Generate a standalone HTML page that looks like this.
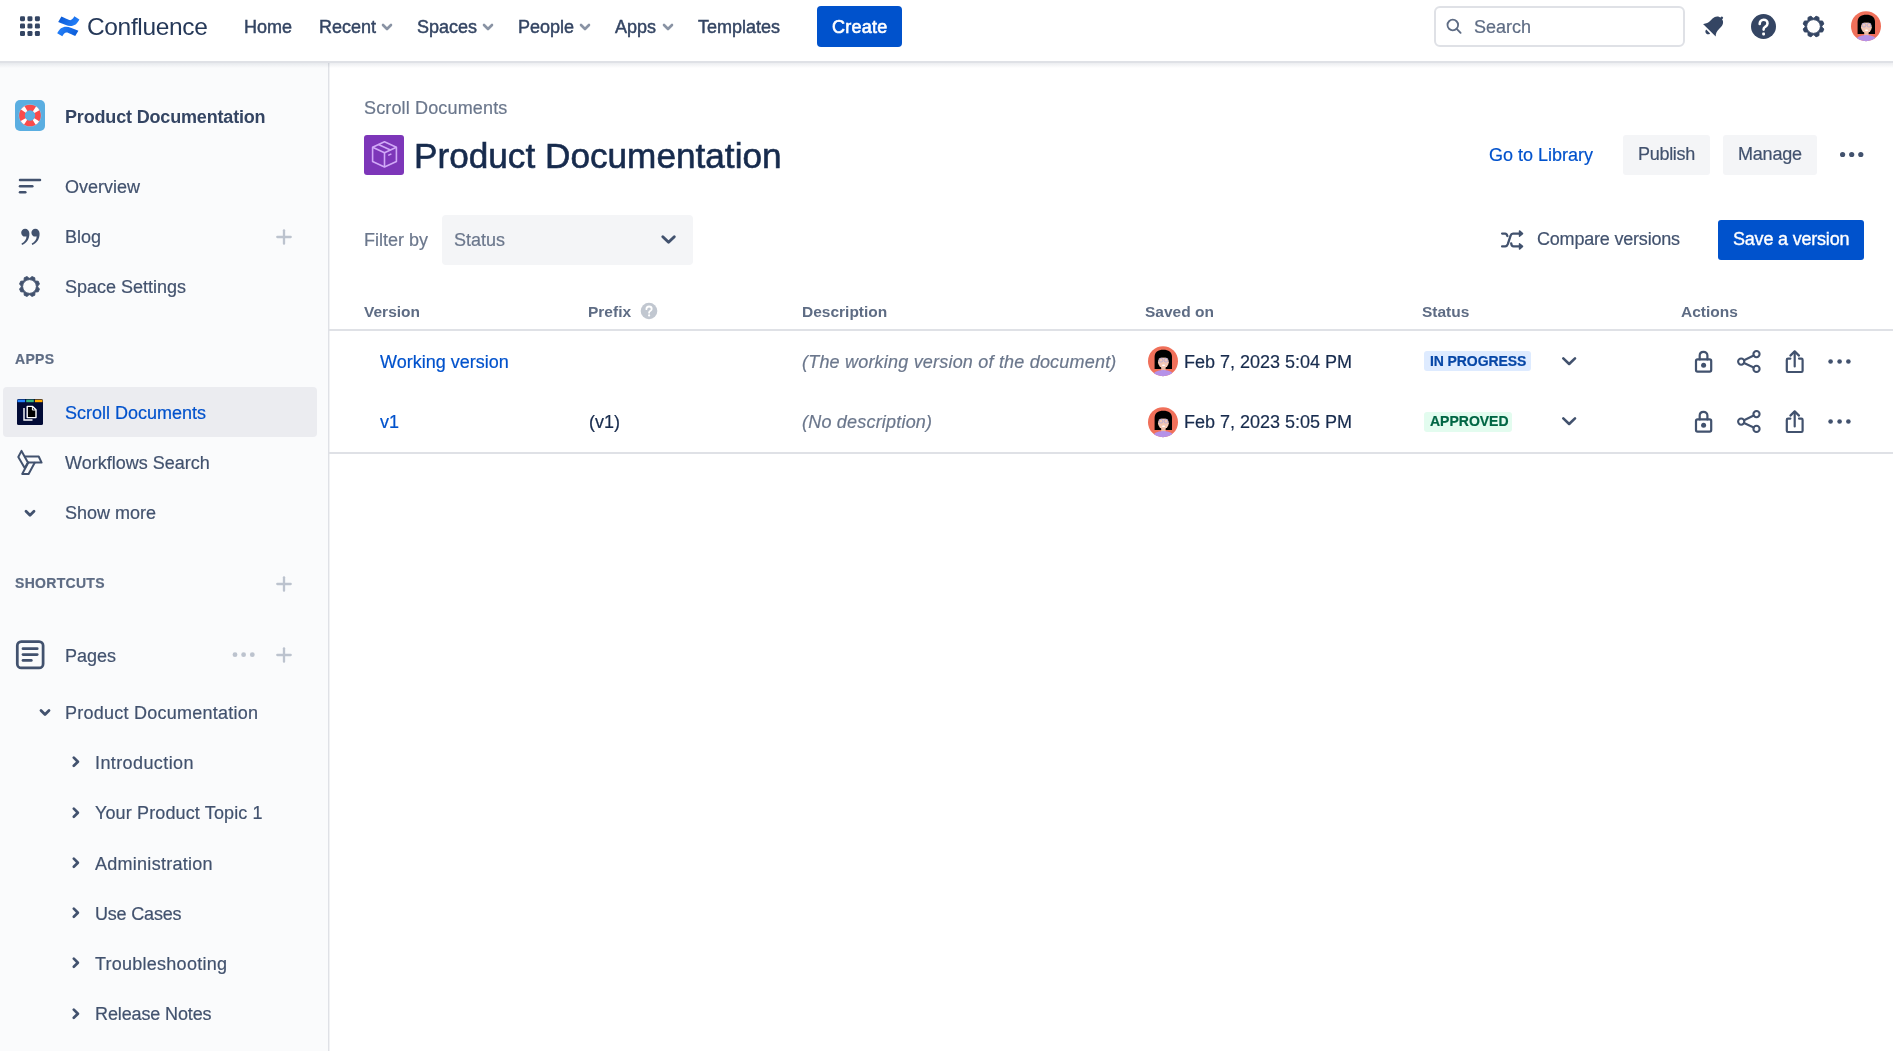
<!DOCTYPE html>
<html><head><meta charset="utf-8">
<style>
*{box-sizing:border-box;margin:0;padding:0}
html,body{width:1893px;height:1051px;overflow:hidden;background:#fff;font-family:"Liberation Sans",sans-serif;color:#172B4D}
.a{position:absolute;white-space:nowrap;line-height:18px;font-size:18px;-webkit-text-stroke-width:0.2px;will-change:transform}
.hd,.b{-webkit-text-stroke-width:0}
svg{position:absolute;overflow:visible}
#hdr{position:absolute;left:0;top:0;width:1893px;height:62px;background:#fff;z-index:5}
#hdrline{position:absolute;left:0;top:61px;width:1893px;height:2px;background:#DFE1E6;z-index:6}
#hdrshadow{position:absolute;left:0;top:63px;width:1893px;height:5px;background:linear-gradient(rgba(9,30,66,0.08),rgba(9,30,66,0));z-index:6}
#side{position:absolute;left:0;top:62px;width:328px;height:989px;background:#FAFBFC}
#sideline{position:absolute;left:328px;top:62px;width:1px;height:989px;background:#DFE1E6;box-shadow:1px 0 0 #F1F2F4}
.a.nav{color:#344563;-webkit-text-stroke-width:0.45px}
.chev{stroke:#8993A4;stroke-width:2.6;fill:none;stroke-linecap:round;stroke-linejoin:round}
.si{color:#42526E}
.ic{fill:none;stroke:#42526E;stroke-linecap:round;stroke-linejoin:round}
.hd{font-weight:bold;font-size:15.5px;color:#5E6C84}
.btn{position:absolute;border-radius:3px}
</style></head><body>

<!-- HEADER -->
<div id="hdr">
  <!-- app switcher -->
  <svg style="left:20px;top:16px" width="21" height="21" viewBox="0 0 21 21"><g fill="#344563"><rect x="0" y="0.15" width="5" height="5" rx="1.3"/><rect x="7.45" y="0.15" width="5" height="5" rx="1.3"/><rect x="14.9" y="0.15" width="5" height="5" rx="1.3"/><rect x="0" y="7.6" width="5" height="5" rx="1.3"/><rect x="7.45" y="7.6" width="5" height="5" rx="1.3"/><rect x="14.9" y="7.6" width="5" height="5" rx="1.3"/><rect x="0" y="15.05" width="5" height="5" rx="1.3"/><rect x="7.45" y="15.05" width="5" height="5" rx="1.3"/><rect x="14.9" y="15.05" width="5" height="5" rx="1.3"/></g></svg>
  <!-- confluence logo -->
  <svg style="left:57px;top:16px" width="23" height="21" viewBox="0 0 23 21">
    <defs>
      <linearGradient id="lg1" x1="0" y1="0.3" x2="1" y2="0.6"><stop offset="0" stop-color="#0B5AD6"/><stop offset="1" stop-color="#2481FB"/></linearGradient>
    </defs>
    <path id="cfb" d="M4.4 0.5 C7.5 1.8 10.3 3.3 12.2 4.0 C14.3 4.6 15.8 3.2 17.3 0.3 L22.4 3.4 C20.2 7.8 17.5 9.9 13.5 9.9 C10.5 9.9 6.5 8.0 1.2 5.9 Z" fill="url(#lg1)"/>
    <path d="M4.4 0.5 C7.5 1.8 10.3 3.3 12.2 4.0 C14.3 4.6 15.8 3.2 17.3 0.3 L22.4 3.4 C20.2 7.8 17.5 9.9 13.5 9.9 C10.5 9.9 6.5 8.0 1.2 5.9 Z" fill="url(#lg1)" transform="rotate(180 11.3 10.3)"/>
  </svg>
  <div class="a" style="left:87px;top:15px;font-size:24.5px;line-height:24px;letter-spacing:-0.35px;color:#253858;-webkit-text-stroke-width:0">Confluence</div>

  <div class="a nav" style="left:244px;top:18px">Home</div>
  <div class="a nav" style="left:319px;top:18px">Recent</div>
  <svg style="left:382px;top:24px" width="10" height="6"><path class="chev" d="M1 1 L5 5 L9 1"/></svg>
  <div class="a nav" style="left:417px;top:18px">Spaces</div>
  <svg style="left:483px;top:24px" width="10" height="6"><path class="chev" d="M1 1 L5 5 L9 1"/></svg>
  <div class="a nav" style="left:518px;top:18px">People</div>
  <svg style="left:580px;top:24px" width="10" height="6"><path class="chev" d="M1 1 L5 5 L9 1"/></svg>
  <div class="a nav" style="left:615px;top:18px">Apps</div>
  <svg style="left:663px;top:24px" width="10" height="6"><path class="chev" d="M1 1 L5 5 L9 1"/></svg>
  <div class="a nav" style="left:698px;top:18px">Templates</div>

  <div class="btn" style="left:817px;top:6px;width:85px;height:41px;background:#0052CC;border-radius:4px"></div>
  <div class="a" style="left:832px;top:17.5px;color:#fff;-webkit-text-stroke-width:0.6px;letter-spacing:0.25px">Create</div>

  <!-- search -->
  <div style="position:absolute;left:1434px;top:6px;width:251px;height:40.5px;border:2px solid #DFE1E6;border-radius:6px;background:#fff"></div>
  <svg style="left:1447px;top:18px" width="16" height="17" viewBox="0 0 16 17"><circle cx="5.8" cy="7" r="5.3" fill="none" stroke="#5E6C84" stroke-width="1.8"/><path d="M9.7 10.9 L13.6 14.8" stroke="#5E6C84" stroke-width="1.9" stroke-linecap="round"/></svg>
  <div class="a" style="left:1474px;top:18px;color:#5E6C84">Search</div>

  <!-- bell -->
  <svg style="left:1701.8px;top:11.9px" width="25.6" height="25.6" viewBox="0 0 24 24">
    <g transform="rotate(45 12 12)" fill="#344563">
      <path d="M3.6 19.2 C5.6 17.4 6.4 15 6.4 12 L6.4 9.4 C6.4 5.6 8.8 3.4 12 3.4 C15.2 3.4 17.6 5.6 17.6 9.4 L17.6 12 C17.6 15 18.4 17.4 20.4 19.2 Z"/>
      <rect x="10.9" y="1.6" width="2.2" height="2.6" rx="0.8"/>
      <path d="M9.4 20.8 L14.6 20.8 C14.6 22.3 13.5 23.4 12 23.4 C10.5 23.4 9.4 22.3 9.4 20.8 Z"/>
    </g>
  </svg>
  <!-- help -->
  <svg style="left:1751px;top:14px" width="25" height="25" viewBox="0 0 25 25">
    <circle cx="12.5" cy="12.5" r="12.5" fill="#344563"/>
    <path d="M8.7 9.9 C8.7 7.3 10.4 5.7 12.6 5.7 C14.9 5.7 16.5 7.3 16.5 9.4 C16.5 11.4 14.9 12.3 13.9 13 C13 13.6 12.6 14.4 12.6 15.6" fill="none" stroke="#fff" stroke-width="2.6" stroke-linecap="round"/>
    <rect x="11.2" y="18.6" width="2.8" height="2.8" rx="0.8" fill="#fff"/>
  </svg>
  <!-- settings gear -->
  <svg style="left:1802px;top:14.5px" width="23" height="23" viewBox="-0.5 -0.5 23 23"><path fill="#344563" stroke="#344563" stroke-width="1" stroke-linejoin="round" fill-rule="evenodd" d="M19.28 10.49 L21.29 8.44 L20.09 5.54 L17.22 5.50 L16.50 4.78 L16.46 1.91 L13.56 0.71 L11.51 2.72 L10.49 2.72 L8.44 0.71 L5.54 1.91 L5.50 4.78 L4.78 5.50 L1.91 5.54 L0.71 8.44 L2.72 10.49 L2.72 11.51 L0.71 13.56 L1.91 16.46 L4.78 16.50 L5.50 17.22 L5.54 20.09 L8.44 21.29 L10.49 19.28 L11.51 19.28 L13.56 21.29 L16.46 20.09 L16.50 17.22 L17.22 16.50 L20.09 16.46 L21.29 13.56 L19.28 11.51ZM17.90 11.00 A6.9 6.9 0 1 0 4.10 11.00 A6.9 6.9 0 1 0 17.90 11.00Z"/></svg>
  <!-- avatar -->
  <svg style="left:1851px;top:11px" width="30" height="30" viewBox="0 0 30 30" class="avatar"><defs><clipPath id="avc"><circle cx="15" cy="15.2" r="15"/></clipPath></defs>
    <g clip-path="url(#avc)">
      <rect width="30" height="31" fill="#F0705A"/>
      <path d="M6.6 23 L6.6 11 C6.6 6 10 3.8 15.3 3.8 C20.6 3.8 24 6 24 11 L24 23 Z" fill="#000"/>
      <rect x="13.2" y="19" width="4.4" height="6" fill="#EDB9A3"/>
      <ellipse cx="15.4" cy="16.2" rx="5.4" ry="5.6" fill="#F4C8B4"/>
      <rect x="9" y="6" width="13" height="5.6" fill="#000"/>
      <g fill="none" stroke="#9AA0E6" stroke-width="0.6"><circle cx="13" cy="14.2" r="1.9"/><circle cx="18" cy="14.2" r="1.9"/></g>
      <ellipse cx="15.5" cy="19.3" rx="1.7" ry="0.7" fill="#fff"/>
      <ellipse cx="15.3" cy="30" rx="11" ry="6" fill="#B591E8"/>
    </g></svg>
</div>
<div id="hdrline"></div>
<div id="hdrshadow"></div>

<!-- SIDEBAR -->
<div id="side"></div>
<div id="sideline"></div>

<!-- space icon -->
<svg style="left:15px;top:100px" width="30" height="31" viewBox="0 0 30 31">
  <rect x="0" y="0" width="30" height="31" rx="5" fill="#5AAEE1"/>
  <circle cx="15" cy="15.5" r="11" fill="none" stroke="#8CC8EE" stroke-width="0.8"/>
  <circle cx="15" cy="15.5" r="8" fill="none" stroke="#FA4B4B" stroke-width="5.6"/>
  <circle cx="15" cy="15.5" r="8" fill="none" stroke="#fff" stroke-width="5.6" stroke-dasharray="3.6 8.97" stroke-dashoffset="-4.48"/>
</svg>
<div class="a si" style="left:65px;top:108px;font-weight:bold;color:#344563;letter-spacing:-0.17px;-webkit-text-stroke-width:0">Product Documentation</div>

<svg style="left:18px;top:178px" width="24" height="16" viewBox="0 0 24 16"><g class="ic" stroke-width="2.5"><path d="M2 2 L22 2"/><path d="M2 8.2 L14.3 8.2"/><path d="M2 14.3 L7.3 14.3"/></g></svg>
<div class="a si" style="left:65px;top:178px">Overview</div>

<svg style="left:20px;top:228px" width="21" height="18" viewBox="0 0 21 18"><g fill="#42526E"><path d="M5.1 0.7 C7.6 0.7 9.4 2.7 9.4 5.7 C9.4 10.9 6.6 15.3 2 17 L1.5 15.5 C4.6 13.9 6.3 11.5 6.5 8.4 C6.1 8.5 5.6 8.6 5.1 8.6 C2.9 8.6 1.2 6.9 1.2 4.65 C1.2 2.4 2.9 0.7 5.1 0.7 Z"/><path transform="translate(10.2 0)" d="M5.1 0.7 C7.6 0.7 9.4 2.7 9.4 5.7 C9.4 10.9 6.6 15.3 2 17 L1.5 15.5 C4.6 13.9 6.3 11.5 6.5 8.4 C6.1 8.5 5.6 8.6 5.1 8.6 C2.9 8.6 1.2 6.9 1.2 4.65 C1.2 2.4 2.9 0.7 5.1 0.7 Z"/></g></svg>
<div class="a si" style="left:65px;top:228px">Blog</div>
<svg style="left:276px;top:229px" width="16" height="16" viewBox="0 0 16 16"><g stroke="#BCC3CE" stroke-width="2.3" stroke-linecap="round"><path d="M8 1.3 L8 14.7"/><path d="M1.3 8 L14.7 8"/></g></svg>

<svg style="left:18px;top:275px" width="23" height="23" viewBox="-0.5 -0.5 23 23"><path fill="#42526E" stroke="#42526E" stroke-width="1" stroke-linejoin="round" fill-rule="evenodd" d="M19.18 10.50 L20.90 8.53 L19.74 5.75 L17.14 5.57 L16.43 4.86 L16.25 2.26 L13.47 1.10 L11.50 2.82 L10.50 2.82 L8.53 1.10 L5.75 2.26 L5.57 4.86 L4.86 5.57 L2.26 5.75 L1.10 8.53 L2.82 10.50 L2.82 11.50 L1.10 13.47 L2.26 16.25 L4.86 16.43 L5.57 17.14 L5.75 19.74 L8.53 20.90 L10.50 19.18 L11.50 19.18 L13.47 20.90 L16.25 19.74 L16.43 17.14 L17.14 16.43 L19.74 16.25 L20.90 13.47 L19.18 11.50ZM17.90 11.00 A6.9 6.9 0 1 0 4.10 11.00 A6.9 6.9 0 1 0 17.90 11.00Z"/></svg>
<div class="a si" style="left:65px;top:278px">Space Settings</div>

<div class="a" style="left:15px;top:352px;font-size:14px;line-height:14px;font-weight:bold;color:#5E6C84;letter-spacing:0.3px">APPS</div>

<div class="btn" style="left:3px;top:387px;width:314px;height:50px;background:#EBECF0;border-radius:4px"></div>
<svg style="left:17px;top:399px" width="26" height="26" viewBox="0 0 26 26">
  <rect x="0" y="0" width="26" height="26" rx="1.5" fill="#020B36"/>
  <rect x="0.5" y="0.6" width="7.6" height="2.6" fill="#2684FF"/>
  <rect x="9.2" y="0.6" width="7.6" height="2.6" fill="#36B37E"/>
  <rect x="17.9" y="0.6" width="7.6" height="2.6" fill="#FFAB00"/>
  <path d="M7 9 L7 21 L15.5 21" fill="none" stroke="#fff" stroke-width="1.4"/>
  <path d="M10.2 7.4 L15.6 7.4 L19 10.8 L19 18.6 L10.2 18.6 Z" fill="#000" stroke="#fff" stroke-width="1.4" stroke-linejoin="round"/>
  <path d="M15.4 7.6 L15.4 11 L18.8 11" fill="none" stroke="#fff" stroke-width="1"/>
</svg>
<div class="a" style="left:65px;top:404px;color:#0052CC">Scroll Documents</div>

<svg style="left:17px;top:450px" width="26" height="26" viewBox="0 0 26 26"><g class="ic" stroke-width="2">
  <path d="M4.5 0.9 L1.3 7 L7.7 17.9 L10.9 12.6 Z"/>
  <path d="M8.4 6.5 L21.7 6.5 L24.6 12.6 L11.3 12.6"/>
  <path d="M11.3 12.6 L5.2 23.9 L11.6 23.9 L17.7 12.8"/>
</g></svg>
<div class="a si" style="left:65px;top:454px">Workflows Search</div>

<svg style="left:24px;top:509px" width="12" height="9" viewBox="0 0 12 9"><path class="ic" stroke-width="2.8" d="M2 2.2 L6 6.2 L10 2.2"/></svg>
<div class="a si" style="left:65px;top:504.2px">Show more</div>

<div class="a" style="left:15px;top:576px;font-size:14px;line-height:14px;font-weight:bold;color:#5E6C84;letter-spacing:0.3px">SHORTCUTS</div>
<svg style="left:276px;top:576px" width="16" height="16" viewBox="0 0 16 16"><g stroke="#BCC3CE" stroke-width="2.3" stroke-linecap="round"><path d="M8 1.3 L8 14.7"/><path d="M1.3 8 L14.7 8"/></g></svg>

<svg style="left:15px;top:639px" width="30" height="31" viewBox="0 0 30 31"><g class="ic" stroke-width="2.75">
  <rect x="2.3" y="2.5" width="25.8" height="26.4" rx="4"/>
  <path d="M8 9.7 L22.2 9.7"/><path d="M8 15.6 L22.2 15.6"/><path d="M8 21.4 L16.3 21.4"/>
</g></svg>
<div class="a si" style="left:65px;top:647px">Pages</div>
<svg style="left:231px;top:650px" width="26" height="9" viewBox="0 0 26 9"><g fill="#BCC3CE"><circle cx="4" cy="4.7" r="2.4"/><circle cx="12.6" cy="4.7" r="2.4"/><circle cx="21.3" cy="4.7" r="2.4"/></g></svg>
<svg style="left:276px;top:647px" width="16" height="16" viewBox="0 0 16 16"><g stroke="#BCC3CE" stroke-width="2.3" stroke-linecap="round"><path d="M8 1.3 L8 14.7"/><path d="M1.3 8 L14.7 8"/></g></svg>

<svg style="left:38px;top:707px" width="14" height="11" viewBox="0 0 14 11"><path class="ic" stroke-width="2.8" d="M3 3.4 L7 7.4 L11 3.4"/></svg>
<div class="a si" style="left:65px;top:704px;letter-spacing:0.25px">Product Documentation</div>
<svg style="left:70px;top:755.40px" width="12" height="14" viewBox="0 0 12 14"><path class="ic" stroke-width="2.7" d="M3.8 2.6 L7.9 6.7 L3.8 10.8"/></svg>
<div class="a si" style="left:95px;top:754.10px;letter-spacing:0.4px">Introduction</div>
<svg style="left:70px;top:805.62px" width="12" height="14" viewBox="0 0 12 14"><path class="ic" stroke-width="2.7" d="M3.8 2.6 L7.9 6.7 L3.8 10.8"/></svg>
<div class="a si" style="left:95px;top:804.32px;letter-spacing:0.13px">Your Product Topic 1</div>
<svg style="left:70px;top:855.84px" width="12" height="14" viewBox="0 0 12 14"><path class="ic" stroke-width="2.7" d="M3.8 2.6 L7.9 6.7 L3.8 10.8"/></svg>
<div class="a si" style="left:95px;top:854.54px;letter-spacing:0.27px">Administration</div>
<svg style="left:70px;top:906.06px" width="12" height="14" viewBox="0 0 12 14"><path class="ic" stroke-width="2.7" d="M3.8 2.6 L7.9 6.7 L3.8 10.8"/></svg>
<div class="a si" style="left:95px;top:904.76px;letter-spacing:-0.19px">Use Cases</div>
<svg style="left:70px;top:956.28px" width="12" height="14" viewBox="0 0 12 14"><path class="ic" stroke-width="2.7" d="M3.8 2.6 L7.9 6.7 L3.8 10.8"/></svg>
<div class="a si" style="left:95px;top:954.98px;letter-spacing:0.25px">Troubleshooting</div>
<svg style="left:70px;top:1006.50px" width="12" height="14" viewBox="0 0 12 14"><path class="ic" stroke-width="2.7" d="M3.8 2.6 L7.9 6.7 L3.8 10.8"/></svg>
<div class="a si" style="left:95px;top:1005.20px;letter-spacing:-0.12px">Release Notes</div>

<!-- MAIN -->
<div class="a" style="left:364px;top:98.7px;color:#6B778C;letter-spacing:0.15px">Scroll Documents</div>
<div class="btn" style="left:364px;top:135px;width:40px;height:40px;background:#7D36B9;border-radius:3px"></div>
<div class="a" style="left:414px;top:138.2px;font-size:35px;line-height:34px;color:#172B4D;-webkit-text-stroke:0.6px #172B4D;transform:scale(1.005,1.025);transform-origin:0 0">Product Documentation</div>

<!-- title box icon -->
<svg style="left:372px;top:141px" width="26" height="28" viewBox="0 0 26 28"><g fill="none" stroke="#D1A8F7" stroke-width="1.6" stroke-linejoin="round">
  <path d="M12.5 0.8 L24.4 6.3 L24.4 20.6 L12.5 26 L0.6 20.6 L0.6 6.3 Z"/>
  <path d="M0.6 6.3 L12.5 11.8 L24.4 6.3"/><path d="M12.5 11.8 L12.5 26"/>
  <path d="M6.5 3.6 L18.4 9.1"/><path d="M16.2 14.4 L19.4 12.9"/>
</g></svg>

<div class="a" style="left:364px;top:231px;color:#6B778C">Filter by</div>
<div class="btn" style="left:442px;top:215px;width:251px;height:50px;background:#F4F5F7;border-radius:4px"></div>
<div class="a" style="left:454px;top:231px;color:#6B778C">Status</div>
<svg style="left:660px;top:233px" width="18" height="13" viewBox="0 0 18 13"><path class="ic" stroke-width="2.9" d="M2.8 3.7 L8.55 9.3 L14.3 3.7"/></svg>

<div class="a" style="left:1489px;top:146px;color:#0052CC">Go to Library</div>
<div class="btn" style="left:1623px;top:135px;width:87px;height:40px;background:#F4F5F7"></div>
<div class="a" style="left:1638px;top:145.3px;color:#42526E;letter-spacing:-0.3px">Publish</div>
<div class="btn" style="left:1723px;top:135px;width:94px;height:40px;background:#F4F5F7"></div>
<div class="a" style="left:1738px;top:145.3px;color:#42526E;letter-spacing:-0.2px">Manage</div>
<svg style="left:1839px;top:150px" width="26" height="9" viewBox="0 0 26 9"><g fill="#42526E"><circle cx="3.6" cy="4.5" r="2.6"/><circle cx="12.7" cy="4.5" r="2.6"/><circle cx="21.8" cy="4.5" r="2.6"/></g></svg>

<svg style="left:1499px;top:228px" width="27" height="24" viewBox="0 0 27 24"><g class="ic" stroke-width="2.3">
  <path d="M3.1 5.6 L6.2 5.6 C7.3 5.6 7.9 6.4 8.4 8"/>
  <path d="M3.1 18.4 L6.2 18.4 C7.6 18.4 8.3 17.6 8.8 16.2 L11.6 7.6 C12 6.3 12.7 5.6 14 5.6 L21 5.6"/>
  <path d="M12.2 15.4 C12.4 17.4 13 18.4 14.5 18.4 L21 18.4"/>
</g><g fill="#42526E" stroke="#42526E" stroke-width="1.4" stroke-linejoin="round">
  <path d="M20.5 2.9 L23.6 5.6 L20.5 8.3 Z"/><path d="M20.5 15.7 L23.6 18.4 L20.5 21.1 Z"/>
</g></svg>
<div class="a" style="left:1537px;top:230px;color:#42526E;letter-spacing:-0.2px">Compare versions</div>
<div class="btn" style="left:1718px;top:220px;width:146px;height:40px;background:#0052CC"></div>
<div class="a" style="left:1733px;top:230px;color:#fff;letter-spacing:-0.2px;-webkit-text-stroke-width:0.35px">Save a version</div>

<!-- table -->
<div class="a hd" style="left:364px;top:302.5px">Version</div>
<div class="a hd" style="left:588px;top:302.5px">Prefix</div>
<svg style="left:640px;top:302px" width="18" height="18" viewBox="0 0 18 18"><circle cx="9" cy="9" r="8.3" fill="#C1C7D0"/><path d="M6.4 7.2 C6.4 5.5 7.6 4.5 9.1 4.5 C10.6 4.5 11.7 5.5 11.7 6.9 C11.7 8.3 10.5 8.8 9.8 9.3 C9.3 9.6 9.1 10 9.1 10.8" fill="none" stroke="#fff" stroke-width="1.8" stroke-linecap="round"/><circle cx="9.1" cy="13.4" r="1.1" fill="#fff"/></svg>
<div class="a hd" style="left:802px;top:302.5px">Description</div>
<div class="a hd" style="left:1145px;top:302.5px">Saved on</div>
<div class="a hd" style="left:1422px;top:302.5px">Status</div>
<div class="a hd" style="left:1681px;top:302.5px">Actions</div>
<div style="position:absolute;left:328px;top:329px;width:1565px;height:2px;background:#DFE1E6"></div>

<div class="a" style="left:380px;top:353px;color:#0052CC">Working version</div>
<div class="a" style="left:802px;top:353px;color:#6B778C;font-style:italic;letter-spacing:0.2px">(The working version of the document)</div>
<svg style="left:1148px;top:346px" width="30" height="30" viewBox="0 0 30 30"><defs><clipPath id="av1"><circle cx="15" cy="15.2" r="15"/></clipPath></defs>
    <g clip-path="url(#av1)">
      <rect width="30" height="31" fill="#F0705A"/>
      <path d="M6.6 23 L6.6 11 C6.6 6 10 3.8 15.3 3.8 C20.6 3.8 24 6 24 11 L24 23 Z" fill="#000"/>
      <rect x="13.2" y="19" width="4.4" height="6" fill="#EDB9A3"/>
      <ellipse cx="15.4" cy="16.2" rx="5.4" ry="5.6" fill="#F4C8B4"/>
      <rect x="9" y="6" width="13" height="5.6" fill="#000"/>
      <g fill="none" stroke="#9AA0E6" stroke-width="0.6"><circle cx="13" cy="14.2" r="1.9"/><circle cx="18" cy="14.2" r="1.9"/></g>
      <ellipse cx="15.5" cy="19.3" rx="1.7" ry="0.7" fill="#fff"/>
      <ellipse cx="15.3" cy="30" rx="11" ry="6" fill="#B591E8"/>
    </g></svg>
<div class="a" style="left:1184px;top:353px;color:#172B4D">Feb 7, 2023 5:04 PM</div>
<div class="btn" style="left:1424px;top:351px;width:107px;height:20px;background:#DEEBFF"></div>
<div class="a" style="left:1430px;top:354px;font-size:14px;line-height:14px;font-weight:bold;color:#0747A6;letter-spacing:-0.1px">IN PROGRESS</div>
<svg style="left:1560px;top:355px" width="18" height="12" viewBox="0 0 18 12"><path class="ic" stroke-width="2.6" d="M3.3 3.4 L9.15 9 L15 3.4"/></svg>
<svg style="left:1692px;top:350px" width="22" height="24" viewBox="0 0 22 24"><g class="ic" stroke-width="2.2">
  <rect x="4" y="9.4" width="15.2" height="12.2" rx="1.5"/><path d="M7.7 9.4 L7.7 5.6 C7.7 3.3 9.4 1.8 11.5 1.8 C13.6 1.8 15.4 3.3 15.4 5.6 L15.4 9.4"/>
</g><circle cx="11.6" cy="15.3" r="2.5" fill="#42526E"/></svg>
<svg style="left:1736px;top:350px" width="26" height="24" viewBox="0 0 26 24"><g class="ic" stroke-width="2.1">
  <circle cx="20.5" cy="4.1" r="3.1"/><circle cx="5.2" cy="11.6" r="3.1"/><circle cx="20.5" cy="18.9" r="3.1"/>
  <path d="M8 10.2 L17.7 5.5"/><path d="M8 13 L17.7 17.5"/>
</g></svg>
<svg style="left:1784px;top:350px" width="22" height="24" viewBox="0 0 22 24"><g class="ic" stroke-width="2.2">
  <path d="M6.4 8.6 L4 8.6 C3.2 8.6 2.8 9.1 2.8 9.9 L2.8 20.8 C2.8 21.6 3.3 22 4 22 L17.4 22 C18.2 22 18.6 21.6 18.6 20.8 L18.6 9.9 C18.6 9.1 18.1 8.6 17.4 8.6 L15 8.6"/>
  <path d="M10.7 16.4 L10.7 1.8"/><path d="M6.4 5.6 L10.7 1.4 L15 5.6"/>
</g></svg>
<svg style="left:1827px;top:357px" width="26" height="9" viewBox="0 0 26 9"><g fill="#42526E"><circle cx="3.6" cy="4.5" r="2.3"/><circle cx="12.6" cy="4.5" r="2.3"/><circle cx="21.4" cy="4.5" r="2.3"/></g></svg>

<div class="a" style="left:380px;top:413px;color:#0052CC">v1</div>
<div class="a" style="left:589px;top:413px;color:#172B4D">(v1)</div>
<div class="a" style="left:802px;top:413px;color:#6B778C;font-style:italic;letter-spacing:0.2px">(No description)</div>
<svg style="left:1148px;top:407px" width="30" height="30" viewBox="0 0 30 30"><defs><clipPath id="av2"><circle cx="15" cy="15.2" r="15"/></clipPath></defs>
    <g clip-path="url(#av2)">
      <rect width="30" height="31" fill="#F0705A"/>
      <path d="M6.6 23 L6.6 11 C6.6 6 10 3.8 15.3 3.8 C20.6 3.8 24 6 24 11 L24 23 Z" fill="#000"/>
      <rect x="13.2" y="19" width="4.4" height="6" fill="#EDB9A3"/>
      <ellipse cx="15.4" cy="16.2" rx="5.4" ry="5.6" fill="#F4C8B4"/>
      <rect x="9" y="6" width="13" height="5.6" fill="#000"/>
      <g fill="none" stroke="#9AA0E6" stroke-width="0.6"><circle cx="13" cy="14.2" r="1.9"/><circle cx="18" cy="14.2" r="1.9"/></g>
      <ellipse cx="15.5" cy="19.3" rx="1.7" ry="0.7" fill="#fff"/>
      <ellipse cx="15.3" cy="30" rx="11" ry="6" fill="#B591E8"/>
    </g></svg>
<div class="a" style="left:1184px;top:413px;color:#172B4D">Feb 7, 2023 5:05 PM</div>
<div class="btn" style="left:1424px;top:412px;width:88px;height:20px;background:#E3FCEF"></div>
<div class="a" style="left:1430px;top:414px;font-size:14px;line-height:14px;font-weight:bold;color:#006644">APPROVED</div>
<svg style="left:1560px;top:415px" width="18" height="12" viewBox="0 0 18 12"><path class="ic" stroke-width="2.6" d="M3.3 3.4 L9.15 9 L15 3.4"/></svg>
<svg style="left:1692px;top:410px" width="22" height="24" viewBox="0 0 22 24"><g class="ic" stroke-width="2.2">
  <rect x="4" y="9.4" width="15.2" height="12.2" rx="1.5"/><path d="M7.7 9.4 L7.7 5.6 C7.7 3.3 9.4 1.8 11.5 1.8 C13.6 1.8 15.4 3.3 15.4 5.6 L15.4 9.4"/>
</g><circle cx="11.6" cy="15.3" r="2.5" fill="#42526E"/></svg>
<svg style="left:1736px;top:410px" width="26" height="24" viewBox="0 0 26 24"><g class="ic" stroke-width="2.1">
  <circle cx="20.5" cy="4.1" r="3.1"/><circle cx="5.2" cy="11.6" r="3.1"/><circle cx="20.5" cy="18.9" r="3.1"/>
  <path d="M8 10.2 L17.7 5.5"/><path d="M8 13 L17.7 17.5"/>
</g></svg>
<svg style="left:1784px;top:410px" width="22" height="24" viewBox="0 0 22 24"><g class="ic" stroke-width="2.2">
  <path d="M6.4 8.6 L4 8.6 C3.2 8.6 2.8 9.1 2.8 9.9 L2.8 20.8 C2.8 21.6 3.3 22 4 22 L17.4 22 C18.2 22 18.6 21.6 18.6 20.8 L18.6 9.9 C18.6 9.1 18.1 8.6 17.4 8.6 L15 8.6"/>
  <path d="M10.7 16.4 L10.7 1.8"/><path d="M6.4 5.6 L10.7 1.4 L15 5.6"/>
</g></svg>
<svg style="left:1827px;top:417px" width="26" height="9" viewBox="0 0 26 9"><g fill="#42526E"><circle cx="3.6" cy="4.5" r="2.3"/><circle cx="12.6" cy="4.5" r="2.3"/><circle cx="21.4" cy="4.5" r="2.3"/></g></svg>
<div style="position:absolute;left:328px;top:452px;width:1565px;height:2px;background:#DFE1E6"></div>

</body></html>
